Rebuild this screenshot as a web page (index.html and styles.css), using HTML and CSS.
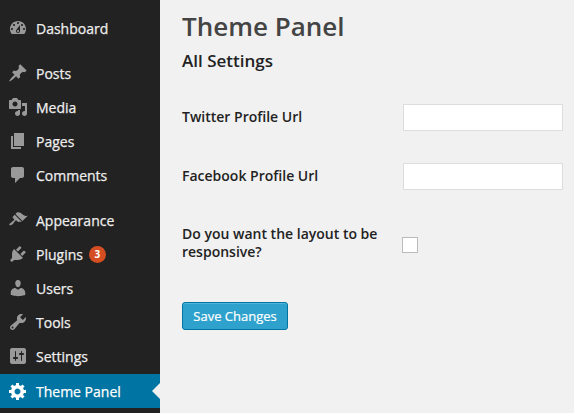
FILE: index.html
```html
<!DOCTYPE html>
<html>
<head>
    <meta charset="utf-8">
    <title>Theme Panel</title>
    <link rel="stylesheet" href="styles.css">
</head>
<body>
<div class="admin">
    <ul class="menu">
        <li class="item group-first">
            <svg class="icon" viewBox="0 0 20 20"><path d="M3.76 16h12.48c1.1-1.37 1.76-3.11 1.76-5 0-4.42-3.58-8-8-8s-8 3.58-8 8c0 1.89.66 3.63 1.76 5zM10 4c.55 0 1 .45 1 1s-.45 1-1 1-1-.45-1-1 .45-1 1-1zM6 6c.55 0 1 .45 1 1s-.45 1-1 1-1-.45-1-1 .45-1 1-1zm8 0c.55 0 1 .45 1 1s-.45 1-1 1-1-.45-1-1 .45-1 1-1zm-5.37 5.55L12 7v6c0 1.1-.9 2-2 2s-2-.9-2-2c0-.57.24-1.08.63-1.45zM4 10c.55 0 1 .45 1 1s-.45 1-1 1-1-.45-1-1 .45-1 1-1zm12 0c.55 0 1 .45 1 1s-.45 1-1 1-1-.45-1-1 .45-1 1-1zm-5 3c0-.55-.45-1-1-1s-1 .45-1 1 .45 1 1 1 1-.45 1-1z"/></svg>
            Dashboard
        </li>
        <li class="item group-start">
            <svg class="icon" viewBox="0 0 20 20"><path d="M10.44 3.02l1.82-1.82 6.36 6.35-1.83 1.82c-1.05-.68-2.48-.57-3.41.36l-.75.75c-.92.93-1.04 2.35-.35 3.41l-1.83 1.82-2.41-2.41-2.8 2.79c-.42.42-3.38 2.71-3.8 2.29s1.86-3.39 2.28-3.81l2.79-2.79L4.1 9.36l1.83-1.82c1.05.69 2.48.57 3.4-.36l.75-.75c.93-.92 1.05-2.35.36-3.41z"/></svg>
            Posts
        </li>
        <li class="item">
            <svg class="icon" viewBox="0 0 20 20"><path d="M13 11V4c0-.55-.45-1-1-1h-1.67L9 1H5L3.67 3H2c-.55 0-1 .45-1 1v7c0 .55.45 1 1 1h10c.55 0 1-.45 1-1zM7 4.5c1.38 0 2.5 1.12 2.5 2.5S8.38 9.5 7 9.5 4.5 8.38 4.5 7 5.62 4.5 7 4.5zM14 6h5v10.5c0 1.38-1.12 2.5-2.5 2.5S14 17.88 14 16.5s1.12-2.5 2.5-2.5c.17 0 .34.02.5.05V9h-3V6zm-4 8.05V13h2v3.5c0 1.38-1.12 2.5-2.5 2.5S7 17.88 7 16.5 8.12 14 9.5 14c.17 0 .34.02.5.05z"/></svg>
            Media
        </li>
        <li class="item">
            <svg class="icon" viewBox="0 0 20 20"><path d="M6 15V2h10v13H6zm-1 1h8v2H3V5h2v11z"/></svg>
            Pages
        </li>
        <li class="item">
            <svg class="icon" viewBox="0 0 20 20"><path d="M5 2h9c1.1 0 2 .9 2 2v7c0 1.1-.9 2-2 2h-2l-5 5v-5H5c-1.1 0-2-.9-2-2V4c0-1.1.9-2 2-2z"/></svg>
            Comments
        </li>
        <li class="item group-start">
            <svg class="icon" viewBox="0 0 20 20"><path d="M14.48 11.06L7.41 3.99l1.5-1.5c.5-.56 2.3-.47 3.51.32 1.21.8 1.43 1.28 2.91 2.1 1.18.64 2.45 1.26 4.45.85zm-.71.71L6.7 4.7 4.93 6.47c-.39.39-.39 1.02 0 1.41l1.06 1.06c.39.39.39 1.03 0 1.42-.6.6-1.43 1.11-2.21 1.69-.35.26-.7.53-1.01.84C1.43 13.23.99 14.5 1.6 15.1c.61.61 1.87.17 3.21-1.17.31-.31.58-.66.84-1.01.58-.78 1.09-1.61 1.69-2.21.39-.39 1.02-.39 1.41 0l1.06 1.06c.39.39 1.02.39 1.41 0z"/></svg>
            Appearance
        </li>
        <li class="item">
            <svg class="icon" viewBox="0 0 20 20"><path d="M13.11 4.36L9.87 7.6 8 5.73l3.24-3.24c.35-.34 1.05-.2 1.56.32.52.51.66 1.21.31 1.55zm-8 1.77l.91-1.12 9.01 9.01-1.19.84c-.71.71-2.63 1.16-3.82 1.16H6.14L4.9 17.26c-.59.59-1.54.59-2.12 0-.59-.58-.59-1.53 0-2.12l1.24-1.24v-3.88c0-1.13.4-3.19 1.09-3.89zm7.26 3.97l3.24-3.24c.34-.35 1.04-.21 1.55.31.52.51.66 1.21.31 1.55l-3.24 3.25z"/></svg>
            Plugins
            <span class="badge">3</span>
        </li>
        <li class="item">
            <svg class="icon" viewBox="0 0 20 20"><path d="M10 9.25c-2.27 0-2.73-3.44-2.73-3.44C7 4.02 7.82 2 9.97 2c2.16 0 2.98 2.02 2.71 3.81 0 0-.41 3.44-2.68 3.44zm0 2.57L12.72 10c2.39 0 4.52 2.33 4.52 4.53v2.49s-3.65 1.13-7.24 1.13c-3.65 0-7.24-1.13-7.24-1.13v-2.49c0-2.25 1.94-4.48 4.47-4.48z"/></svg>
            Users
        </li>
        <li class="item">
            <svg class="icon" viewBox="0 0 20 20"><path d="M16.68 9.77c-1.34 1.34-3.3 1.67-4.95.99l-5.41 6.52c-.99.99-2.59.99-3.58 0s-.99-2.59 0-3.57l6.52-5.42c-.68-1.65-.35-3.61.99-4.95 1.28-1.28 3.12-1.62 4.72-1.06l-2.89 2.89 2.82 2.82 2.86-2.87c.53 1.58.18 3.39-1.08 4.65zM3.81 16.21c.4.39 1.04.39 1.43 0 .4-.4.4-1.04 0-1.43-.39-.4-1.03-.4-1.43 0-.39.39-.39 1.03 0 1.43z"/></svg>
            Tools
        </li>
        <li class="item">
            <svg class="icon" viewBox="0 0 20 20"><path d="M18 16V4c0-1.1-.9-2-2-2H4c-1.1 0-2 .9-2 2v12c0 1.1.9 2 2 2h12c1.1 0 2-.9 2-2zM8 11h1c.55 0 1 .45 1 1s-.45 1-1 1H8v1.5c0 .28-.22.5-.5.5s-.5-.22-.5-.5V13H6c-.55 0-1-.45-1-1s.45-1 1-1h1V5.5c0-.28.22-.5.5-.5s.5.22.5.5V11zm5-2h-1c-.55 0-1-.45-1-1s.45-1 1-1h1V5.5c0-.28.22-.5.5-.5s.5.22.5.5V7h1c.55 0 1 .45 1 1s-.45 1-1 1h-1v5.5c0 .28-.22.5-.5.5s-.5-.22-.5-.5V9z"/></svg>
            Settings
        </li>
        <li class="item current">
            <svg class="icon" viewBox="0 0 20 20"><path d="M18 12h-2.18c-.17.7-.44 1.35-.81 1.93l1.54 1.54-2.1 2.1-1.54-1.54c-.58.36-1.23.63-1.91.79V19H8v-2.18c-.68-.16-1.33-.43-1.91-.79l-1.54 1.54-2.12-2.12 1.54-1.54c-.36-.58-.63-1.23-.79-1.91H1V9.03h2.17c.16-.7.44-1.35.8-1.94L2.43 5.55l2.1-2.1 1.54 1.54c.58-.37 1.24-.64 1.93-.81V2h3v2.18c.68.16 1.33.43 1.91.79l1.54-1.54 2.12 2.12-1.54 1.54c.36.59.64 1.24.8 1.94H18V12zm-8.5 1.5c1.66 0 3-1.34 3-3s-1.34-3-3-3-3 1.34-3 3 1.34 3 3 3z"/></svg>
            Theme Panel
        </li>
    </ul>
    <div class="content">
        <h1>Theme Panel</h1>
        <h2>All Settings</h2>
        <div class="row row-first">
            <label>Twitter Profile Url</label>
            <input type="text">
        </div>
        <div class="row">
            <label>Facebook Profile Url</label>
            <input type="text">
        </div>
        <div class="row row-check">
            <label>Do you want the layout to be responsive?</label>
            <span class="checkbox"></span>
        </div>
        <button>Save Changes</button>
    </div>
</div>
</body>
</html>
```

FILE: styles.css
```css
* { box-sizing: border-box; }
html, body { margin: 0; height: 100%; overflow: hidden; }
body { background: #f1f1f1; font-family: "Open Sans", "Liberation Sans", sans-serif; color: #222; }
.admin { display: flex; height: 413px; }

/* sidebar */
.menu { width: 160px; flex: none; margin: 0; padding: 11px 0 0; list-style: none; background: #222; }
.item { position: relative; display: flex; align-items: center; height: 34px; padding-left: 36px; font-size: 14px; color: #eee; -webkit-text-stroke: .25px; }
.group-start { margin-top: 11px; }
.icon { position: absolute; left: 8px; top: 7px; width: 20px; height: 20px; fill: #999; }
.badge { width: 17px; height: 17px; margin-left: 6px; border-radius: 50%; background: #d54e21; color: #fff; font-size: 10px; font-weight: 700; line-height: 17px; text-align: center; -webkit-text-stroke: 0; }
.current { margin-top: 1px; background: #0074a2; color: #fff; }
.current .icon { fill: #fff; }
.current::after { content: ""; position: absolute; right: 0; top: 9px; border: 8px solid transparent; border-left-width: 0; border-right-color: #f1f1f1; }

/* main column */
.content { flex: 1; padding: 0 11px 0 22px; }
h1 { margin: 11px 0 0; font-size: 26px; font-weight: 600; line-height: 30px; color: #444; }
h2 { margin: 8px 0 0; font-size: 17px; font-weight: 600; line-height: 24px; color: #222; }
.row { display: flex; align-items: center; margin-top: 32px; font-size: 14px; font-weight: 600; }
.row-first { margin-top: 31px; }
.row label { width: 221px; padding-bottom: 2px; line-height: 20px; }
.row input { width: 160px; height: 27px; padding: 0; border: 1px solid #ddd; background: #fff; }
.row-check { margin-top: 35px; }
.row-check label { width: 220px; padding: 0 10px 0 0; line-height: 18px; }
.checkbox { width: 16px; height: 16px; margin-top: 4px; border: 1px solid #bbb; background: #fff; }
button { display: block; width: 106px; height: 28px; margin-top: 41px; padding: 0; border: 1px solid #0074a2; border-radius: 3px; background: #2ea2cc; color: #fff; font: 500 13px "Open Sans", "Liberation Sans", sans-serif; -webkit-text-stroke: .2px; box-shadow: inset 0 1px 0 rgba(120,200,230,.5); }
```
